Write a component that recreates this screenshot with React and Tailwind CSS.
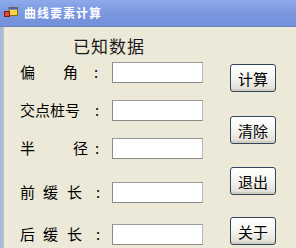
const cjk = { fontFamily: '"Noto Sans CJK SC", sans-serif' };

function Field({ top, children }) {
  return (
    <div className={`flex items-center h-[21px] ${top}`}>
      <div className="w-[16px] shrink-0" />
      <div className="w-[92px] shrink-0 flex items-center text-[15px] leading-[15px] text-black -mt-[3px]">
        {children}
      </div>
      <div className="w-[91px] h-[21px] bg-white border border-[#8a8a8a] border-r-[#b8b8b8] border-t-[#9a9a9a]" />
    </div>
  );
}

function XpButton({ label, top }) {
  return (
    <button
      className={`${top} w-[46px] h-[28px] rounded-[3px] border border-[#34445a] bg-gradient-to-b from-white via-[#f5f5f0] to-[#dcdcd2] text-[15px] leading-[15px] text-black flex items-center justify-center shadow-[inset_0_-2px_0_#d0cec0]`}
    >
      {label}
    </button>
  );
}

export default function App() {
  return (
    <div className="w-[296px] h-[248px] overflow-hidden bg-[#ECE9D8] flex flex-col" style={cjk}>
      {/* TITLE BAR */}
      <div className="h-[27px] shrink-0 flex items-center bg-gradient-to-b from-[#8eaaeb] via-[#7a97e0] to-[#7390da] border-b border-[#6a82c4]">
        <svg width="14" height="12" viewBox="0 0 14 12" className="ml-[4px]">
          <rect x="5" y="0.5" width="8.5" height="8" fill="#f7d44a" stroke="#8a6a10" strokeWidth="1" />
          <rect x="5" y="0.5" width="8.5" height="2" fill="#3b5fc4" />
          <rect x="0.5" y="4.5" width="5" height="5" fill="#e8453a" stroke="#7a2010" strokeWidth="1" />
        </svg>
        <span className="ml-[6px] text-[12px] font-bold text-white tracking-[1px] leading-[12px]">
          曲线要素计算
        </span>
      </div>

      {/* BODY */}
      <div className="flex-1 flex border-l-[3px] border-[#a9b8dd]">
        <div className="flex-1 flex border-l border-[#c2c2ba]">
          {/* LEFT: fields */}
          <div className="w-[199px] shrink-0 flex flex-col">
            <div className="mt-[9px] pl-[69px] h-[20px] text-[17px] leading-[20px] tracking-[1px] text-[#1a1a1a]">
              已知数据
            </div>

            <Field top="mt-[6px]">
              <span className="w-[43px]">偏</span>
              <span className="w-[31px]">角</span>
              <span>:</span>
            </Field>

            <Field top="mt-[17px]">
              <span className="w-[75px]">交点桩号</span>
              <span>:</span>
            </Field>

            <Field top="mt-[17px]">
              <span className="w-[53px]">半</span>
              <span className="w-[22px]">径</span>
              <span>:</span>
            </Field>

            <Field top="mt-[23px]">
              <span className="w-[23px]">前</span>
              <span className="w-[24px]">缓</span>
              <span className="w-[29px]">长</span>
              <span>:</span>
            </Field>

            <Field top="mt-[21px]">
              <span className="w-[23px]">后</span>
              <span className="w-[24px]">缓</span>
              <span className="w-[29px]">长</span>
              <span>:</span>
            </Field>
          </div>

          {/* RIGHT: buttons */}
          <div className="ml-[27px] flex flex-col">
            <XpButton label="计算" top="mt-[37px]" />
            <XpButton label="清除" top="mt-[24px]" />
            <XpButton label="退出" top="mt-[23px]" />
            <XpButton label="关于" top="mt-[22px]" />
          </div>
        </div>
      </div>
    </div>
  );
}
